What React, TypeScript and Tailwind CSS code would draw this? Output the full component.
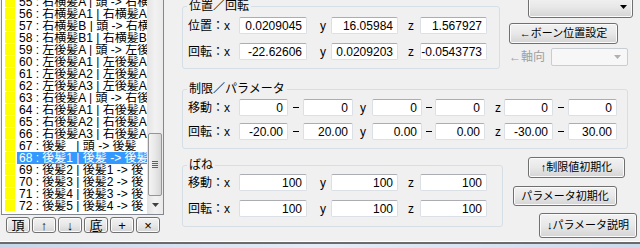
import React from 'react';

// list rows as they show in the (clipped) list column
const rows: [number, string][] = [
  [55, '右横髪A | 頭 -> 右横'],
  [56, '右横髪A1 | 右横髪A'],
  [57, '右横髪B | 頭 -> 右横'],
  [58, '右横髪B1 | 右横髪B'],
  [59, '左後髪A | 頭 -> 左後'],
  [60, '左後髪A1 | 左後髪A'],
  [61, '左後髪A2 | 左後髪A'],
  [62, '左後髪A3 | 左後髪A'],
  [63, '右後髪A | 頭 -> 右後'],
  [64, '右後髪A1 | 右後髪A'],
  [65, '右後髪A2 | 右後髪A'],
  [66, '右後髪A3 | 右後髪A'],
  [67, '後髪   | 頭 -> 後髪'],
  [68, '後髪1 | 後髪 -> 後髪'],
  [69, '後髪2 | 後髪1 -> 後'],
  [70, '後髪3 | 後髪2 -> 後'],
  [71, '後髪4 | 後髪3 -> 後'],
  [72, '後髪5 | 後髪4 -> 後'],
];

const SELECTED = 68;

// Win7 style push button
const Btn = ({ children, className = '' }: { children: React.ReactNode; className?: string }) => (
  <div
    className={`flex items-center justify-center border border-[#707070] rounded-[3px] bg-gradient-to-b from-[#f2f2f2] via-[#e8e8e8] to-[#d4d4d4] shadow-[inset_0_0_0_1px_#fbfbfb] text-black ${className}`}
  >
    {children}
  </div>
);

// Text box with right-aligned value
const Field = ({ value, className = '' }: { value: string; className?: string }) => (
  <div
    className={`h-[17px] bg-white border border-[#dbdfe6] border-t-[#abadb3] rounded-[2px] flex items-center justify-end pr-[4px] text-[12px] leading-none ${className}`}
  >
    {value}
  </div>
);

const Label = ({ children, className = '' }: { children: React.ReactNode; className?: string }) => (
  <span className={`text-[12px] leading-none ${className}`}>{children}</span>
);

const Dash = ({ className = '' }: { className?: string }) => (
  <span className={`flex justify-center ${className}`}>
    <span className="w-[6px] h-[1px] bg-black" />
  </span>
);

const ListBox = () => (
  <div className="h-[215px] w-[163px] border-l border-r border-b border-[#828790] flex bg-white">
    <div className="flex-1 overflow-hidden">
      <div className="-mt-[4px]">
        {rows.map(([n, text]) => {
          const sel = n === SELECTED;
          return (
            <div key={n} className="h-[12px] flex">
              <span className="ml-[3px] w-[10px] h-[11px] bg-[#ffff00]" />
              <span
                className={`ml-[2px] flex-1 pl-[2px] whitespace-pre overflow-hidden text-[12px] leading-[12px] ${
                  sel ? 'bg-[#3399ff] text-white' : 'text-black'
                }`}
              >
                {`${n} : ${text}`}
              </span>
            </div>
          );
        })}
      </div>
    </div>
    {/* vertical scrollbar */}
    <div className="w-[16px] flex flex-col bg-gradient-to-r from-[#e3e3e3] via-[#f2f2f2] to-[#eaeaea]">
      <div className="h-[133px]" />
      <div className="h-[63px] mx-[1px] border border-[#959595] rounded-[2px] bg-gradient-to-r from-[#f4f4f4] via-[#e8e8e8] to-[#d6d6d6] flex flex-col items-center justify-center gap-[1px]">
        <span className="w-[6px] h-[1px] bg-[#606060]" />
        <span className="w-[6px] h-[1px] bg-[#606060]" />
        <span className="w-[6px] h-[1px] bg-[#606060]" />
        <span className="w-[6px] h-[1px] bg-[#606060]" />
      </div>
      <div className="flex-1 flex items-center justify-center">
        <svg width="7" height="4" viewBox="0 0 7 4">
          <path d="M0 0h7L3.5 4z" fill="#404040" />
        </svg>
      </div>
    </div>
  </div>
);

const SmallBtn = ({ children }: { children: React.ReactNode }) => (
  <Btn className="w-[24px] h-[16px] text-[13px] leading-none">{children}</Btn>
);

export default function App() {
  return (
    <div className="w-[640px] h-[248px] bg-[#f0f0f0] overflow-hidden flex flex-col font-['Liberation_Sans','Noto_Sans_CJK_JP',sans-serif] text-black">
      <div className="flex h-[241px]">
        {/* bone list */}
        <div className="w-[164px] pl-[1px] flex flex-col">
          <ListBox />
          <div className="flex gap-[2px] mt-[2px] pl-[5px]">
            <SmallBtn>頂</SmallBtn>
            <SmallBtn>↑</SmallBtn>
            <SmallBtn>↓</SmallBtn>
            <SmallBtn>底</SmallBtn>
            <SmallBtn>+</SmallBtn>
            <SmallBtn>×</SmallBtn>
          </div>
        </div>

        {/* properties */}
        <div className="ml-[18px] flex flex-col">
          {/* position / rotation */}
          <div className="flex items-start">
            <fieldset className="w-[318px] h-[69px] border border-[#d5dfe5] rounded-[3px]">
              <legend className="ml-[4px] px-[2px] text-[12px] leading-[12px]">位置／回転</legend>
              <div className="pl-[5px] flex flex-col gap-[9px] mt-[5px]">
                <div className="flex items-center">
                  <Label className="w-[51px]">位置：x</Label>
                  <Field className="w-[68px]" value="0.0209045" />
                  <Label className="ml-[13px] w-[11px]">y</Label>
                  <Field className="w-[67px]" value="16.05984" />
                  <Label className="ml-[10px] w-[12px]">z</Label>
                  <Field className="w-[67px]" value="1.567927" />
                </div>
                <div className="flex items-center">
                  <Label className="w-[51px]">回転：x</Label>
                  <Field className="w-[68px]" value="-22.62606" />
                  <Label className="ml-[13px] w-[11px]">y</Label>
                  <Field className="w-[67px]" value="0.0209203" />
                  <Label className="ml-[10px] w-[12px]">z</Label>
                  <Field className="w-[67px]" value="-0.0543773" />
                </div>
              </div>
            </fieldset>
            <div className="ml-[9px] w-[124px] flex flex-col">
              <div className="ml-[19px] w-[105px] -mt-[4px] h-[22px] border border-[#707070] rounded-[3px] bg-gradient-to-b from-[#f2f2f2] via-[#e8e8e8] to-[#d4d4d4] shadow-[inset_0_0_0_1px_#fbfbfb] flex items-center justify-end pr-[5px]">
                <svg width="7" height="4" viewBox="0 0 7 4">
                  <path d="M0 0h7L3.5 4z" fill="#000" />
                </svg>
              </div>
              <Btn className="mt-[5px] w-[109px] h-[21px] text-[11px] leading-none">←ボーン位置設定</Btn>
              <div className="mt-[4px] flex items-center">
                <Label className="w-[42px] text-[#a0a0a0]">←軸向</Label>
                <div className="w-[77px] h-[18px] border border-[#c8cdd2] rounded-[2px] bg-[#f7f7f7] flex items-center justify-end pr-[6px]">
                  <svg width="7" height="4" viewBox="0 0 7 4">
                    <path d="M0 0h7L3.5 4z" fill="#b0b0b0" />
                  </svg>
                </div>
              </div>
            </div>
          </div>

          {/* limits / parameters */}
          <fieldset className="mt-[14px] w-[446px] h-[66px] border border-[#d5dfe5] rounded-[3px]">
            <legend className="ml-[4px] px-[2px] text-[12px] leading-[12px]">制限／パラメータ</legend>
            <div className="pl-[5px] flex flex-col gap-[7px] mt-[4px]">
              <div className="flex items-center">
                <Label className="w-[51px]">移動：x</Label>
                <Field className="w-[49px]" value="0" />
                <Dash className="w-[15px]" />
                <Field className="w-[50px]" value="0" />
                <Label className="ml-[7px] w-[12px]">y</Label>
                <Field className="w-[50px]" value="0" />
                <Dash className="w-[13px]" />
                <Field className="w-[50px]" value="0" />
                <Label className="ml-[10px] w-[9px]">z</Label>
                <Field className="w-[49px]" value="0" />
                <Dash className="w-[15px]" />
                <Field className="w-[49px]" value="0" />
              </div>
              <div className="flex items-center">
                <Label className="w-[51px]">回転：x</Label>
                <Field className="w-[49px]" value="-20.00" />
                <Dash className="w-[15px]" />
                <Field className="w-[50px]" value="20.00" />
                <Label className="ml-[7px] w-[12px]">y</Label>
                <Field className="w-[50px]" value="0.00" />
                <Dash className="w-[13px]" />
                <Field className="w-[50px]" value="0.00" />
                <Label className="ml-[10px] w-[9px]">z</Label>
                <Field className="w-[49px]" value="-30.00" />
                <Dash className="w-[15px]" />
                <Field className="w-[49px]" value="30.00" />
              </div>
            </div>
          </fieldset>

          {/* spring */}
          <div className="mt-[8px] flex items-start">
            <fieldset className="mt-[2px] w-[321px] h-[68px] border border-[#d5dfe5] rounded-[3px]">
              <legend className="ml-[4px] px-[2px] text-[12px] leading-[12px]">ばね</legend>
              <div className="pl-[5px] flex flex-col gap-[9px] mt-[3px]">
                <div className="flex items-center">
                  <Label className="w-[51px]">移動：x</Label>
                  <Field className="w-[68px]" value="100" />
                  <Label className="ml-[13px] w-[11px]">y</Label>
                  <Field className="w-[67px]" value="100" />
                  <Label className="ml-[10px] w-[12px]">z</Label>
                  <Field className="w-[67px]" value="100" />
                </div>
                <div className="flex items-center">
                  <Label className="w-[51px]">回転：x</Label>
                  <Field className="w-[68px]" value="100" />
                  <Label className="ml-[13px] w-[11px]">y</Label>
                  <Field className="w-[67px]" value="100" />
                  <Label className="ml-[10px] w-[12px]">z</Label>
                  <Field className="w-[67px]" value="100" />
                </div>
              </div>
            </fieldset>
            <div className="ml-[10px] flex flex-col">
              <Btn className="ml-[15px] w-[97px] h-[21px] text-[11px] leading-none">↑制限値初期化</Btn>
              <Btn className="mt-[8px] w-[104px] h-[20px] text-[11px] leading-none">パラメータ初期化</Btn>
              <Btn className="mt-[7px] ml-[26px] w-[98px] h-[25px] text-[11px] leading-none">↓パラメータ説明</Btn>
            </div>
          </div>
        </div>
      </div>

      {/* window frame edge */}
      <div className="h-[1px] bg-white" />
      <div className="h-[2px] bg-[#6b6b6b]" />
      <div className="flex-1 bg-gradient-to-r from-[#c6d6ea] via-[#e4edf7] to-[#cbdaec]" />
    </div>
  );
}
